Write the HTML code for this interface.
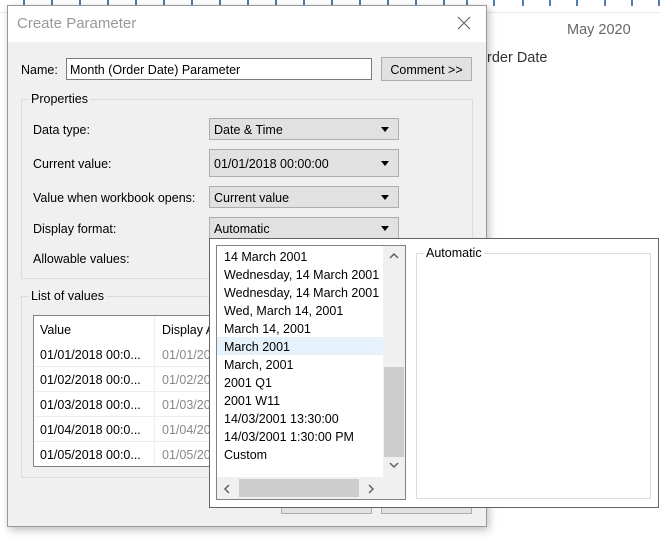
<!DOCTYPE html>
<html><head><style>
*{box-sizing:border-box;margin:0;padding:0}
body{width:661px;height:541px;background:#fff;position:relative;overflow:hidden;font-family:"Liberation Sans",sans-serif;font-size:12.5px;color:#000}
.a{position:absolute;white-space:nowrap}
.tick{position:absolute;top:0;width:2px;height:6px;background:#4f7cac}
.sel{position:absolute;left:209px;width:190px;background:#e1e1e1;border:1px solid #adadad;padding-left:4px}
.sel:after{content:"";position:absolute;right:9px;top:50%;margin-top:-2px;border-left:4px solid transparent;border-right:4px solid transparent;border-top:5px solid #000}
.btn{position:absolute;background:#e1e1e1;border:1px solid #adadad;text-align:center}
.grp{position:absolute;border:1px solid #dcdcdc}
.leg{position:absolute;background:#f0f0f0;padding:0 2px}
</style></head><body>
<div class="a" style="left:0;top:12px;width:661px;height:1px;background:#e8e8e8"></div>
<div class="tick" style="left:23px"></div><div class="tick" style="left:51px"></div><div class="tick" style="left:79px"></div>
<div class="tick" style="left:107px"></div><div class="tick" style="left:135px"></div><div class="tick" style="left:163px"></div>
<div class="tick" style="left:191px"></div><div class="tick" style="left:219px"></div><div class="tick" style="left:247px"></div>
<div class="tick" style="left:275px"></div><div class="tick" style="left:303px"></div><div class="tick" style="left:331px"></div>
<div class="tick" style="left:359px"></div><div class="tick" style="left:387px"></div><div class="tick" style="left:415px"></div>
<div class="tick" style="left:443px"></div><div class="tick" style="left:466px"></div>
<div class="tick" style="left:493px"></div><div class="tick" style="left:522px"></div><div class="tick" style="left:549px"></div>
<div class="tick" style="left:576px"></div><div class="tick" style="left:604px"></div><div class="tick" style="left:631px"></div><div class="tick" style="left:658px"></div>
<div class="a" style="left:478px;top:22px;font-size:14.5px;color:#666">9</div>
<div class="a" style="left:567px;top:22px;font-size:14.5px;color:#666">May 2020</div>
<div class="a" style="left:487px;top:50px;font-size:14.5px;color:#333">rder Date</div>

<div class="a" style="left:7px;top:5px;width:480px;height:522px;background:#f0f0f0;border:1px solid #999;box-shadow:2px 3px 8px rgba(0,0,0,.25)"></div>
<div class="a" style="left:8px;top:6px;width:478px;height:36px;background:#fff"></div>
<div class="a" style="left:17px;top:15px;font-size:15px;color:#999">Create Parameter</div>
<svg class="a" style="left:457px;top:16px" width="14" height="14"><path d="M1 1L13 13M13 1L1 13" stroke="#666" stroke-width="1.2"/></svg>

<div class="a" style="left:21px;top:63px">Name:</div>
<div class="a" style="left:66px;top:58px;width:306px;height:22px;background:#fff;border:1px solid #7a7a7a;padding:4px 3px 0">Month (Order Date) Parameter</div>
<div class="btn" style="left:381px;top:57px;width:91px;height:24px;padding-top:5px">Comment &gt;&gt;</div>

<div class="grp" style="left:21px;top:99px;width:452px;height:180px"></div>
<div class="leg a" style="left:29px;top:92px">Properties</div>
<div class="a" style="left:33px;top:123px">Data type:</div>
<div class="a" style="left:33px;top:157px">Current value:</div>
<div class="a" style="left:33px;top:191px">Value when workbook opens:</div>
<div class="a" style="left:33px;top:222px">Display format:</div>
<div class="a" style="left:33px;top:252px">Allowable values:</div>
<div class="sel" style="top:118px;height:22px;padding-top:4px">Date &amp; Time</div>
<div class="sel" style="top:149px;height:28px;padding-top:7px">01/01/2018 00:00:00</div>
<div class="sel" style="top:186px;height:22px;padding-top:4px">Current value</div>
<div class="sel" style="top:217px;height:22px;padding-top:4px">Automatic</div>

<div class="grp" style="left:21px;top:296px;width:452px;height:182px"></div>
<div class="leg a" style="left:29px;top:289px">List of values</div>
<div class="a" style="left:33px;top:315px;width:200px;height:152px;background:#fff;border:1px solid #828282"></div>
<div class="a" style="left:154px;top:316px;width:1px;height:150px;background:#eee"></div>
<div class="a" style="left:40px;top:323px">Value</div>
<div class="a" style="left:162px;top:323px">Display A</div>
<div class="a" style="left:34px;top:366px;width:180px;height:1px;background:#eee"></div>
<div class="a" style="left:34px;top:391px;width:180px;height:1px;background:#eee"></div>
<div class="a" style="left:34px;top:416px;width:180px;height:1px;background:#eee"></div>
<div class="a" style="left:34px;top:441px;width:180px;height:1px;background:#eee"></div>
<div class="a" style="left:40px;top:348px">01/01/2018 00:0...</div><div class="a" style="left:162px;top:348px;color:#888">01/01/20</div>
<div class="a" style="left:40px;top:373px">01/02/2018 00:0...</div><div class="a" style="left:162px;top:373px;color:#888">01/02/20</div>
<div class="a" style="left:40px;top:398px">01/03/2018 00:0...</div><div class="a" style="left:162px;top:398px;color:#888">01/03/20</div>
<div class="a" style="left:40px;top:423px">01/04/2018 00:0...</div><div class="a" style="left:162px;top:423px;color:#888">01/04/20</div>
<div class="a" style="left:40px;top:448px">01/05/2018 00:0...</div><div class="a" style="left:162px;top:448px;color:#888">01/05/20</div>
<div class="btn" style="left:281px;top:490px;width:91px;height:24px"></div>
<div class="btn" style="left:381px;top:490px;width:91px;height:24px"></div>

<div class="a" style="left:209px;top:238px;width:450px;height:270px;background:#fff;border:1px solid #646464"></div>
<div class="a" style="left:216px;top:245px;width:190px;height:255px;border:1px solid #828282;background:#fff;overflow:hidden">
<div class="a" style="left:0;top:91px;width:166px;height:18px;background:#e5f1fb"></div>
<div class="a" style="left:7px;top:2px;line-height:18px">14 March 2001<br>Wednesday, 14 March 2001<br>Wednesday, 14 March 2001<br>Wed, March 14, 2001<br>March 14, 2001<br>March 2001<br>March, 2001<br>2001 Q1<br>2001 W11<br>14/03/2001 13:30:00<br>14/03/2001 1:30:00 PM<br>Custom</div>
<div class="a" style="left:166px;top:0;width:22px;height:253px;background:#f0f0f0"></div>
<div class="a" style="left:167px;top:121px;width:20px;height:90px;background:#cdcdcd"></div>
<div class="a" style="left:0;top:231px;width:166px;height:22px;background:#f0f0f0"></div>
<div class="a" style="left:22px;top:233px;width:120px;height:18px;background:#cdcdcd"></div>
<svg class="a" style="left:171px;top:5px" width="12" height="10"><path d="M2 7L6 3L10 7" stroke="#606060" fill="none" stroke-width="1.5"/></svg>
<svg class="a" style="left:171px;top:214px" width="12" height="10"><path d="M2 3L6 7L10 3" stroke="#606060" fill="none" stroke-width="1.5"/></svg>
<svg class="a" style="left:5px;top:237px" width="10" height="12"><path d="M7 2L3 6L7 10" stroke="#606060" fill="none" stroke-width="1.5"/></svg>
<svg class="a" style="left:149px;top:237px" width="10" height="12"><path d="M3 2L7 6L3 10" stroke="#606060" fill="none" stroke-width="1.5"/></svg>
</div>
<div class="a" style="left:416px;top:253px;width:235px;height:246px;border:1px solid #dcdcdc"></div>
<div class="a" style="left:424px;top:246px;background:#fff;padding:0 2px">Automatic</div>
</body></html>
